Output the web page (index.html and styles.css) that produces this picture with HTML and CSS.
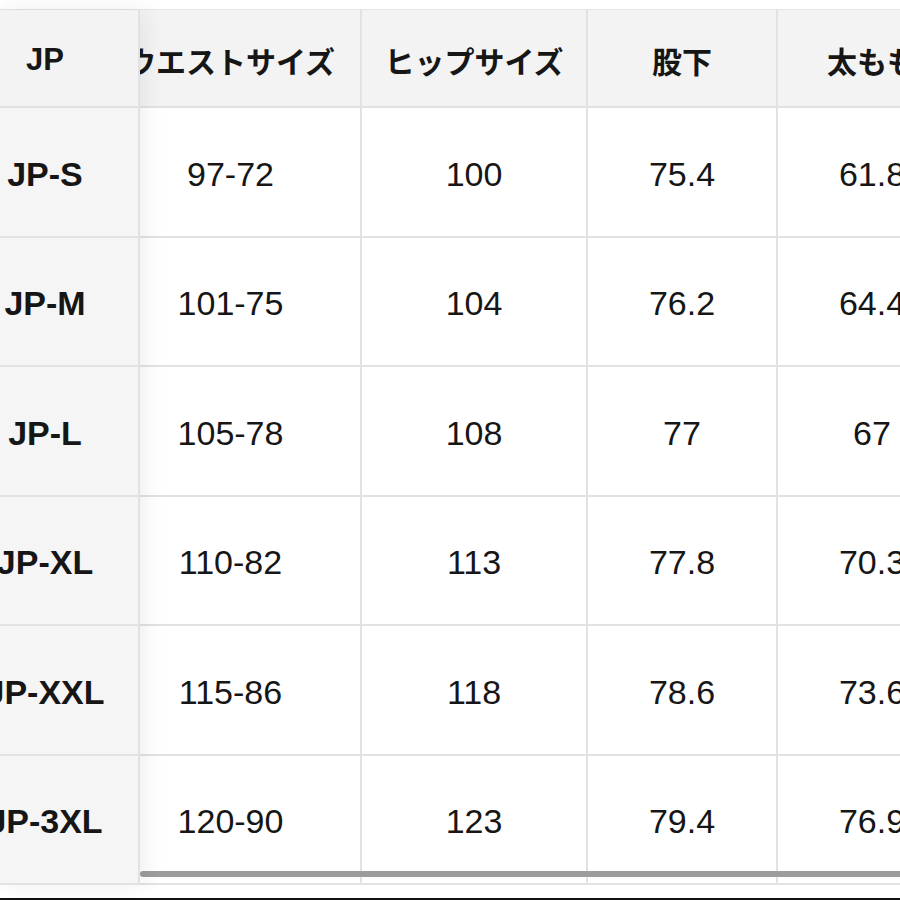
FILE: index.html
```html
<!DOCTYPE html>
<html lang="ja">
<head>
<meta charset="utf-8">
<title>サイズ表</title>
<link rel="stylesheet" href="styles.css">
</head>
<body>
<div class="screen">
  <div class="size-table">
    <div class="col-fixed">
      <div class="fcell head">JP</div>
      <div class="fcell">JP-S</div>
      <div class="fcell">JP-M</div>
      <div class="fcell">JP-L</div>
      <div class="fcell">JP-XL</div>
      <div class="fcell">JP-XXL</div>
      <div class="fcell">JP-3XL</div>
    </div>
    <div class="scroll">
      <div class="grid">
        <div class="cell head">ウエストサイズ</div>
        <div class="cell head">ヒップサイズ</div>
        <div class="cell head">股下</div>
        <div class="cell head">太もも</div>

        <div class="cell">97-72</div>
        <div class="cell">100</div>
        <div class="cell">75.4</div>
        <div class="cell">61.8</div>

        <div class="cell">101-75</div>
        <div class="cell">104</div>
        <div class="cell">76.2</div>
        <div class="cell">64.4</div>

        <div class="cell">105-78</div>
        <div class="cell">108</div>
        <div class="cell">77</div>
        <div class="cell">67</div>

        <div class="cell">110-82</div>
        <div class="cell">113</div>
        <div class="cell">77.8</div>
        <div class="cell">70.3</div>

        <div class="cell">115-86</div>
        <div class="cell">118</div>
        <div class="cell">78.6</div>
        <div class="cell">73.6</div>

        <div class="cell">120-90</div>
        <div class="cell">123</div>
        <div class="cell">79.4</div>
        <div class="cell">76.9</div>
      </div>
      <div class="thumb"></div>
    </div>
  </div>
</div>
</body>
</html>
```

FILE: styles.css
```css
html, body {
  margin: 0;
  padding: 0;
  background: #ffffff;
}

.screen {
  width: 900px;
  height: 900px;
  box-sizing: border-box;
  overflow: hidden;
  padding-top: 9px;
  border-bottom: 2px solid #111111;
  font-family: "Liberation Sans", "Noto Sans CJK JP", sans-serif;
  color: #161616;
}

.size-table {
  display: flex;
  border-top: 1px solid #e4e4e4;
}

.col-fixed,
.grid {
  display: grid;
  grid-template-rows: 98px 130px 129px 130px 129px 130px 129px;
}

.col-fixed {
  position: relative;
  z-index: 2;
  width: 140px;
  flex: none;
  background: #f5f5f5;
  box-shadow: 4px 0 22px rgba(0, 0, 0, 0.07);
}

.fcell {
  box-sizing: border-box;
  display: flex;
  align-items: center;
  justify-content: center;
  padding: 4px 48px 0 0;
  overflow: hidden;
  white-space: nowrap;
  border-right: 2px solid #e2e2e2;
  border-bottom: 2px solid #e2e2e2;
  font-weight: 700;
  font-size: 34px;
}

.fcell.head {
  background: #f3f3f3;
  font-size: 31px;
}

.scroll {
  position: relative;
  flex: 1;
  overflow: hidden;
}

.grid {
  grid-template-columns: 261px 226px 190px 190px;
  margin-left: -39px;
  width: max-content;
}

.cell {
  box-sizing: border-box;
  display: flex;
  align-items: center;
  justify-content: center;
  padding-top: 4px;
  overflow: hidden;
  white-space: nowrap;
  background: #ffffff;
  border-right: 2px solid #e2e2e2;
  border-bottom: 2px solid #e2e2e2;
  font-size: 34px;
}

.cell.head {
  background: #f3f3f3;
  font-weight: 700;
  font-size: 30px;
}

.thumb {
  position: absolute;
  left: 0;
  right: -20px;
  bottom: 8px;
  height: 6px;
  border-radius: 3px;
  background: #9c9c9c;
}
```
